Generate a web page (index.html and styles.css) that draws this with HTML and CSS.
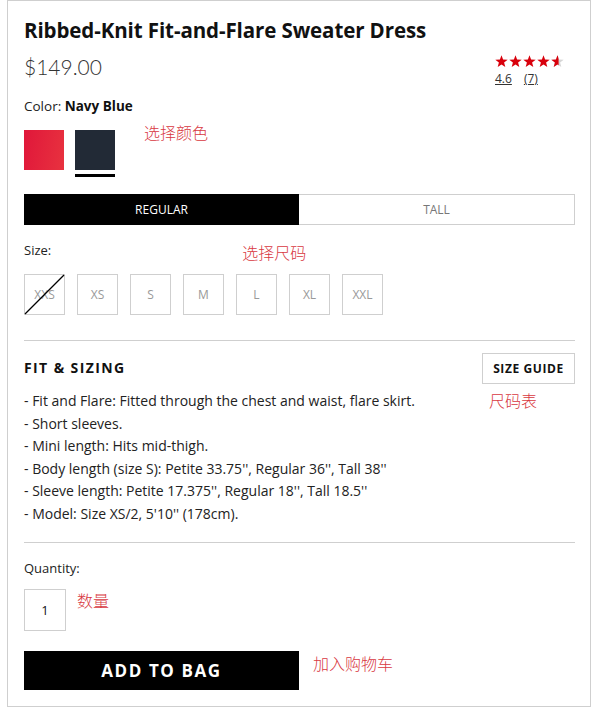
FILE: index.html
```html
<!DOCTYPE html>
<html lang="en">
<head>
<meta charset="utf-8">
<title>Ribbed-Knit Fit-and-Flare Sweater Dress</title>
<link rel="stylesheet" href="styles.css">
</head>
<body>
<div class="page">
  <h1 class="title">Ribbed-Knit Fit-and-Flare Sweater Dress</h1>
  <div class="price-row">
    <div class="price">$149.00</div>
    <div class="rating">
      <svg class="stars" width="69" height="13" viewBox="0 0 69 13">
        <defs>
          <path id="st" d="M6.5 0.3 L8.1 4.6 L12.7 4.8 L9.1 7.6 L10.3 12.1 L6.5 9.5 L2.7 12.1 L3.9 7.6 L0.3 4.8 L4.9 4.6 Z"/>
          <clipPath id="part"><rect x="0" y="0" width="7.6" height="13"/></clipPath>
        </defs>
        <use href="#st" x="0" fill="#d8000c"/>
        <use href="#st" x="14" fill="#d8000c"/>
        <use href="#st" x="28" fill="#d8000c"/>
        <use href="#st" x="42" fill="#d8000c"/>
        <g transform="translate(56 0)">
          <use href="#st" fill="#d6d6d6"/>
          <use href="#st" fill="#d8000c" clip-path="url(#part)"/>
        </g>
      </svg>
      <div class="rating-text"><span class="u">4.6</span><span class="u count">(7)</span></div>
    </div>
  </div>
  <div class="color-line">Color: <b>Navy Blue</b></div>
  <div class="swatch-row">
    <div class="swatch-col"><div class="swatch red"></div></div>
    <div class="swatch-col"><div class="swatch navy"></div><div class="sel-bar"></div></div>
    <div class="note note-color">选择颜色</div>
  </div>
  <div class="tabs">
    <div class="tab active">REGULAR</div>
    <div class="tab">TALL</div>
  </div>
  <div class="size-label-row">
    <span class="label">Size:</span>
    <span class="note note-size">选择尺码</span>
  </div>
  <div class="sizes">
    <div class="size na">XXS<svg class="slash" width="41" height="41" viewBox="0 0 41 41"><line x1="1" y1="40" x2="40" y2="1" stroke="#000" stroke-width="1.3"/></svg></div>
    <div class="size">XS</div>
    <div class="size">S</div>
    <div class="size">M</div>
    <div class="size">L</div>
    <div class="size">XL</div>
    <div class="size">XXL</div>
  </div>
  <div class="divider d1"></div>
  <div class="fit-head">
    <h2 class="fit-title">FIT &amp; SIZING</h2>
    <div class="guide-wrap">
      <div class="guide-btn">SIZE GUIDE</div>
      <div class="note note-guide">尺码表</div>
    </div>
  </div>
  <ul class="fit-list">
    <li>- Fit and Flare: Fitted through the chest and waist, flare skirt.</li>
    <li>- Short sleeves.</li>
    <li>- Mini length: Hits mid-thigh.</li>
    <li>- Body length (size S): Petite 33.75'', Regular 36'', Tall 38''</li>
    <li>- Sleeve length: Petite 17.375'', Regular 18'', Tall 18.5''</li>
    <li>- Model: Size XS/2, 5'10'' (178cm).</li>
  </ul>
  <div class="divider d2"></div>
  <div class="label qty-label">Quantity:</div>
  <div class="qty-row">
    <div class="qty">1</div>
    <div class="note note-qty">数量</div>
  </div>
  <div class="bag-row">
    <div class="bag-btn">ADD TO BAG</div>
    <div class="note note-bag">加入购物车</div>
  </div>
</div>
</body>
</html>
```
FILE: styles.css
```css
* { box-sizing: border-box; }
html, body { margin: 0; padding: 0; background: #fff; }
body {
  font-family: "Open Sans", Lato, "Noto Sans CJK SC", sans-serif;
  color: #222;
}
.page {
  margin-left: 7px;
  width: 584px;
  height: 707px;
  border: 1px solid #cfcfcf;
  padding: 17px 15px 0 16px;
}
.title {
  margin: 0;
  font-size: 20.5px;
  line-height: 24px;
  font-weight: 700;
  letter-spacing: -0.1px;
  color: #111;
}
.price-row {
  display: flex;
  justify-content: space-between;
  margin-top: 10px;
}
.price {
  font-family: Lato, sans-serif;
  font-size: 21px;
  line-height: 30px;
  font-weight: 300;
  color: #333;
}
.rating {
  margin-right: 10px;
  padding-top: 3px;
  width: 70px;
}
.stars { display: block; }
.rating-text {
  font-size: 12px;
  line-height: 14px;
  margin-top: 4px;
  color: #333;
}
.u { text-decoration: underline; }
.count { margin-left: 12px; }
.color-line {
  margin-top: 11px;
  font-size: 13.5px;
  line-height: 18px;
  color: #222;
}
.color-line b { font-weight: 700; color: #111; }
.swatch-row {
  display: flex;
  margin-top: 15px;
  gap: 11px;
  align-items: flex-start;
}
.swatch { width: 40px; height: 40px; }
.swatch.red { background: linear-gradient(100deg, #e0173a, #e8323f); }
.swatch.navy { background: #222a36; }
.sel-bar { margin-top: 4px; height: 3px; background: #000; }
.note {
  font-family: "Noto Sans CJK SC", sans-serif;
  color: #d8383f;
  font-size: 16px;
  line-height: 20px;
  font-weight: 300;
}
.note-color { margin-left: 18px; margin-top: -8px; }
.tabs {
  display: flex;
  margin-top: 17px;
  height: 31px;
  border: 1px solid #cfcfcf;
}
.tab {
  flex: 1;
  display: flex;
  align-items: center;
  justify-content: center;
  font-size: 12px;
  color: #777;
}
.tab.active {
  background: #000;
  color: #fff;
  margin: -1px 0 -1px -1px;
}
.size-label-row {
  display: flex;
  align-items: flex-start;
  height: 18px;
  margin-top: 16px;
}
.label { font-size: 13px; line-height: 18px; color: #222; }
.note-size { margin-left: 191px; margin-top: 1px; }
.sizes {
  display: flex;
  gap: 12px;
  margin-top: 15px;
}
.size {
  position: relative;
  width: 41px;
  height: 41px;
  border: 1px solid #cfcfcf;
  display: flex;
  align-items: center;
  justify-content: center;
  font-size: 12px;
  color: #999;
}
.slash { position: absolute; left: -1px; top: -1px; }
.divider { height: 1px; background: #cfcfcf; }
.d1 { margin-top: 25px; }
.fit-head {
  display: flex;
  justify-content: space-between;
  align-items: flex-start;
  margin-top: 12px;
}
.fit-title {
  margin: 7px 0 0 0;
  font-size: 14px;
  line-height: 16px;
  font-weight: 700;
  letter-spacing: 1.4px;
  color: #111;
}
.guide-wrap { position: relative; }
.guide-btn {
  width: 93px;
  height: 31px;
  border: 1px solid #cfcfcf;
  display: flex;
  align-items: center;
  justify-content: center;
  font-size: 12px;
  font-weight: 700;
  letter-spacing: 0.6px;
  color: #111;
}
.note-guide { position: absolute; left: 7px; top: 37px; }
.fit-list {
  list-style: none;
  margin: 6px 0 0 0;
  padding: 0;
  font-size: 14px;
  line-height: 22.6px;
  color: #222;
}
.d2 { margin-top: 16px; }
.qty-label { margin-top: 16px; }
.qty-row {
  display: flex;
  align-items: flex-start;
  margin-top: 12px;
}
.qty {
  width: 42px;
  height: 42px;
  border: 1px solid #cfcfcf;
  display: flex;
  align-items: center;
  justify-content: center;
  font-size: 13px;
  color: #111;
}
.note-qty { margin-left: 11px; margin-top: 1px; }
.bag-row {
  display: flex;
  align-items: flex-start;
  margin-top: 20px;
}
.bag-btn {
  width: 275px;
  height: 39px;
  background: #000;
  color: #fff;
  display: flex;
  align-items: center;
  justify-content: center;
  font-size: 17px;
  font-weight: 700;
  letter-spacing: 1.6px;
}
.note-bag { margin-left: 14px; margin-top: 2px; }
```
